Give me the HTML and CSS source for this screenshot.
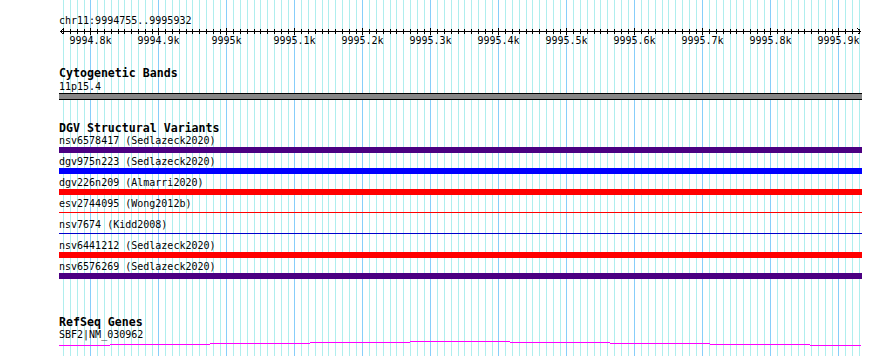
FILE: index.html
```html
<!DOCTYPE html>
<html>
<head>
  <title>chr11:9994755..9995932</title>
  <link rel="stylesheet" href="styles.css">
</head>
<body>
  <div class="browser">
    <svg class="grid" id="grid" width="890" height="356"></svg>

    <div class="tracks">
      <div class="ruler">
        <div class="locus">chr11:9994755..9995932</div>
        <svg class="scale" id="scale" width="803" height="22">
          <rect x="1" y="4" width="801" height="1"></rect>
          <path d="M1.5 4.5 L4.5 1.5 M1.5 4.5 L4.5 7.5 M801.5 4.5 L798.5 1.5 M801.5 4.5 L798.5 7.5"></path>
          <g id="ticks"></g>
          <text x="31.5" y="17">9994.8k</text>
          <text x="99.5" y="17">9994.9k</text>
          <text x="167.5" y="17">9995k</text>
          <text x="235.5" y="17">9995.1k</text>
          <text x="303.5" y="17">9995.2k</text>
          <text x="371.5" y="17">9995.3k</text>
          <text x="439.5" y="17">9995.4k</text>
          <text x="507.5" y="17">9995.5k</text>
          <text x="575.5" y="17">9995.6k</text>
          <text x="643.5" y="17">9995.7k</text>
          <text x="711.5" y="17">9995.8k</text>
          <text x="779.5" y="17">9995.9k</text>
        </svg>
      </div>

      <div class="track cytobands">
        <div class="track-title">Cytogenetic Bands</div>
        <div class="feature-label">11p15.4</div>
        <div class="band"></div>
      </div>

      <div class="track dgv">
        <div class="track-title">DGV Structural Variants</div>
        <div class="feature">
          <div class="feature-label">nsv6578417 (Sedlazeck2020)</div>
          <div class="bar indigo"></div>
        </div>
        <div class="feature">
          <div class="feature-label">dgv975n223 (Sedlazeck2020)</div>
          <div class="bar blue"></div>
        </div>
        <div class="feature">
          <div class="feature-label">dgv226n209 (Almarri2020)</div>
          <div class="bar red"></div>
        </div>
        <div class="feature">
          <div class="feature-label">esv2744095 (Wong2012b)</div>
          <div class="bar thin red-line"></div>
        </div>
        <div class="feature">
          <div class="feature-label">nsv7674 (Kidd2008)</div>
          <div class="bar thin blue-line"></div>
        </div>
        <div class="feature">
          <div class="feature-label">nsv6441212 (Sedlazeck2020)</div>
          <div class="bar red"></div>
        </div>
        <div class="feature">
          <div class="feature-label">nsv6576269 (Sedlazeck2020)</div>
          <div class="bar indigo"></div>
        </div>
      </div>

      <div class="track refseq">
        <div class="track-title">RefSeq Genes</div>
        <div class="feature-label">SBF2|NM_030962</div>
        <svg class="gene" width="803" height="6">
          <rect x="0" y="4" width="51" height="1"></rect>
          <rect x="51" y="3" width="100" height="1"></rect>
          <rect x="151" y="2" width="100" height="1"></rect>
          <rect x="251" y="1" width="100" height="1"></rect>
          <rect x="351" y="0" width="100" height="1"></rect>
          <rect x="451" y="1" width="100" height="1"></rect>
          <rect x="551" y="2" width="100" height="1"></rect>
          <rect x="651" y="3" width="100" height="1"></rect>
          <rect x="751" y="4" width="51" height="1"></rect>
        </svg>
      </div>
    </div>
  </div>

  <script>
    var SVG_NS = 'http://www.w3.org/2000/svg';
    var TRACK_LEFT = 59;
    var grid = document.getElementById('grid');
    var ticks = document.getElementById('ticks');

    // screen x of a base position (0.68 px per bp)
    function bpToX(bp) {
      return Math.floor(158.8 + (bp - 9994900) * 0.68);
    }

    function addRect(parent, x, y, w, h, cls) {
      var r = document.createElementNS(SVG_NS, 'rect');
      r.setAttribute('x', x);
      r.setAttribute('y', y);
      r.setAttribute('width', w);
      r.setAttribute('height', h);
      if (cls) {
        r.setAttribute('class', cls);
      }
      parent.appendChild(r);
    }

    for (var bp = 9994760; bp <= 9995930; bp += 10) {
      var x = bpToX(bp);
      var major = bp % 100 === 0;

      addRect(grid, x, 0, 1, 356, major ? 'major' : 'minor');

      if (major) {
        addRect(ticks, x - TRACK_LEFT, 1, 1, 7);
      } else {
        addRect(ticks, x - TRACK_LEFT, 2, 1, 5);
      }
    }
  </script>
</body>
</html>
```

FILE: styles.css
```css
body {
  margin: 0;
  background: #fff;
  color: #000;
  font-family: "DejaVu Sans Mono", monospace;
  font-size: 10px;
  line-height: 12px;
}

.browser {
  position: relative;
  width: 890px;
  height: 356px;
  overflow: hidden;
}

.grid {
  position: absolute;
  left: 0;
  top: 0;
  shape-rendering: crispEdges;
}

.grid .minor {
  fill: #afeeee;
}

.grid .major {
  fill: #87cefa;
}

.tracks {
  position: relative;
  width: 803px;
  padding-left: 59px;
}

.ruler {
  padding-top: 15px;
  height: 34px;
}

.locus {
  height: 12px;
}

.scale {
  display: block;
  shape-rendering: crispEdges;
}

.scale rect {
  fill: #000;
}

.scale path {
  stroke: #000;
  stroke-width: 1;
  fill: none;
}

.scale text {
  font-family: "DejaVu Sans Mono", monospace;
  font-size: 10px;
  text-anchor: middle;
  fill: #000;
}

.track-title {
  font-weight: bold;
  font-size: 11.6px;
  line-height: 14px;
  height: 14px;
}

.feature-label {
  height: 12px;
  white-space: nowrap;
}

.cytobands {
  margin-top: 17px;
}

.cytobands .feature-label {
  margin-top: 1px;
}

.band {
  height: 5px;
  background: #878787;
  border-top: 1px solid #000;
  border-bottom: 1px solid #000;
}

.dgv {
  margin-top: 21px;
}

.feature {
  height: 21px;
}

.bar {
  height: 6px;
}

.bar.indigo {
  background: #4b0082;
}

.bar.blue {
  background: #0000ff;
}

.bar.red {
  background: #ff0000;
}

.bar.thin {
  box-sizing: border-box;
  padding-top: 2px;
}

.bar.thin::before {
  content: "";
  display: block;
  height: 1px;
}

.bar.red-line::before {
  background: #ff0000;
}

.bar.blue-line::before {
  background: #0000cd;
}

.refseq {
  margin-top: 33px;
}

.gene {
  display: block;
  shape-rendering: crispEdges;
}

.gene rect {
  fill: #ff00ff;
}
```
